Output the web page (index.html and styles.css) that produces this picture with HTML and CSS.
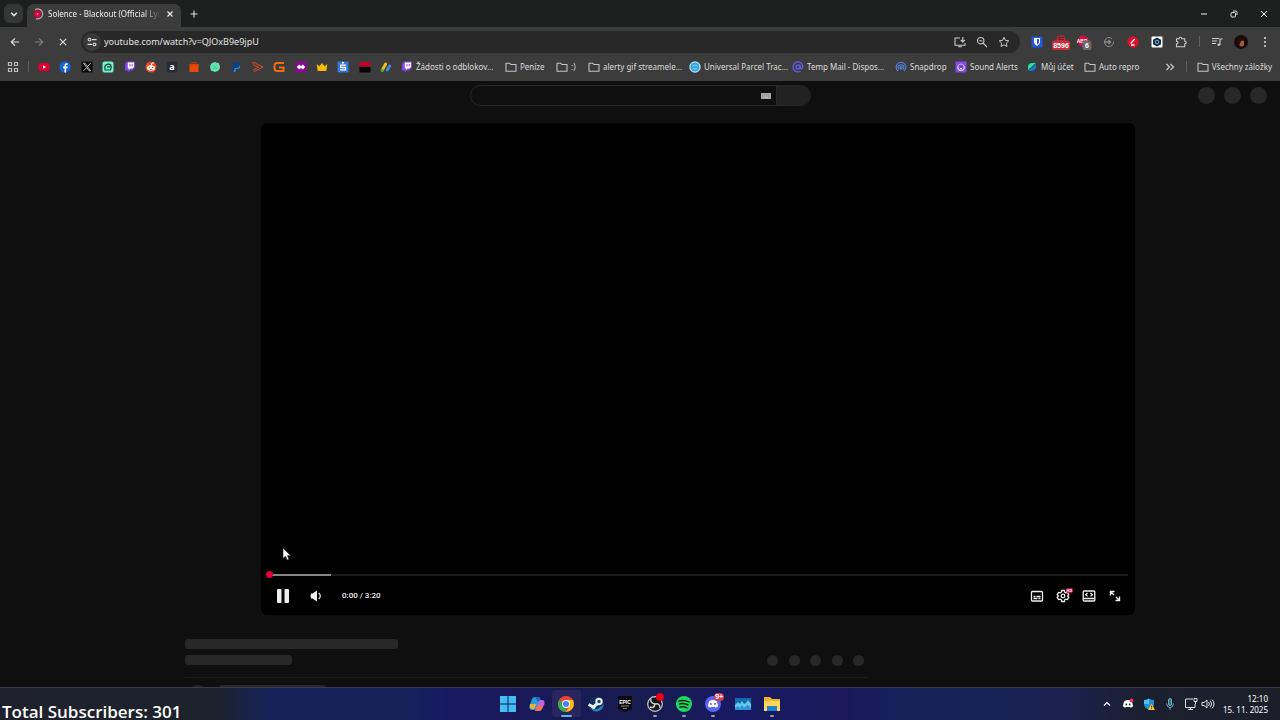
FILE: index.html
```html
<!DOCTYPE html>
<html lang="cs">
<head>
<meta charset="utf-8">
<title>Solence - Blackout (Official Lyric Video)</title>
<link rel="stylesheet" href="styles.css">
</head>
<body>
<svg class="defs" aria-hidden="true">
  <symbol id="folder" viewBox="0 0 12 12"><path d="M1 2.200h3.600l1.200 1.300H11v6.700H1z" fill="none" stroke="#c4c4c4" stroke-width="1.100" stroke-linejoin="round"/></symbol>
  <symbol id="twitch" viewBox="0 0 12 12"><path d="M1 2.700 3.200.5H11v6L7.800 9.400H6L3.700 11.700V9.400H1z" fill="#8446e8"/><path d="M3.800 1.500H10v4.600L8.500 7.500H6.700L5.200 8.800V7.500H3.800z" fill="#fff"/><path d="M6 3v2.300M8.200 3v2.300" stroke="#8446e8" stroke-width="1"/></symbol>
  <symbol id="discord" viewBox="0 0 12 12"><path d="M2.500 3c2-1.200 5-1.200 7 0 1 1.800 1.500 3.600 1.400 5.600-.9.7-1.700 1-2.500 1.100l-.5-.9q-1.900.5-3.800 0l-.5.900C2.800 9.600 2 9.300 1.100 8.600 1 6.600 1.500 4.800 2.500 3z" fill="#fff"/></symbol>
</svg>

<header class="browser">
  <div class="tabstrip">
    <button class="tab-search" aria-label="Hledat karty"><svg viewBox="0 0 10 10"><path d="M2.600 4 5 6.300 7.400 4" fill="none" stroke="#e0e0e0" stroke-width="1.300"/></svg></button>
    <div class="tab">
      <svg class="icon" viewBox="0 0 12 12"><circle cx="5.500" cy="6" r="3.500" fill="#e1003f"/><circle cx="5.500" cy="6" r="1" fill="#ff7898"/><path d="M3 1.700A5 5 0 1 1 4 10.600" fill="none" stroke="#b9a9b4" stroke-width="1.200"/></svg>
      <span class="tab-title">Solence - Blackout (Official Lyric Video)</span>
      <button class="tab-close" aria-label="Zavřít kartu"><svg viewBox="0 0 12 12"><path d="m3.500 3.500 5 5m0-5-5 5" stroke="#eee" stroke-width="1.200"/></svg></button>
    </div>
    <button class="new-tab" aria-label="Nová karta"><svg viewBox="0 0 12 12"><path d="M6 2.500v7M2.500 6h7" stroke="#ddd" stroke-width="1.100"/></svg></button>
    <div class="window-controls">
      <button aria-label="Minimalizovat"><svg viewBox="0 0 12 12"><path d="M3 6h6" stroke="#eee"/></svg></button>
      <button aria-label="Obnovit"><svg viewBox="0 0 12 12" fill="none" stroke="#ddd"><rect x="3" y="4.500" width="4.500" height="4.500" rx="1"/><path d="M5 3h2.500Q9 3 9 4.500V7"/></svg></button>
      <button aria-label="Zavřít"><svg viewBox="0 0 12 12"><path d="m3 3 6 6m0-6L3 9" stroke="#eee"/></svg></button>
    </div>
  </div>

  <div class="toolbar">
    <div class="nav">
      <button aria-label="Zpět"><svg viewBox="0 0 12 12" fill="none" stroke="#ddd" stroke-width="1.200"><path d="M10 6H2.500M6 2.300 2.300 6 6 9.700"/></svg></button>
      <button aria-label="Vpřed"><svg viewBox="0 0 12 12" fill="none" stroke="#808080" stroke-width="1.200"><path d="M2 6h7.500M6 2.300 9.700 6 6 9.700"/></svg></button>
      <button aria-label="Zastavit"><svg viewBox="0 0 12 12"><path d="m2.800 2.800 6.400 6.400m0-6.400L2.800 9.200" stroke="#ddd" stroke-width="1.100"/></svg></button>
    </div>
    <div class="omnibox">
      <button class="site-info" aria-label="Informace o webu"><svg viewBox="0 0 12 12" fill="none" stroke="#ddd" stroke-width="1.100"><circle cx="3.500" cy="3.600" r="1.400"/><path d="M6 3.600h4.500M1.500 8.400H6"/><circle cx="8.500" cy="8.400" r="1.400"/></svg></button>
      <input type="text" aria-label="Adresa" value="youtube.com/watch?v=QJOxB9e9jpU">
      <div class="omni-actions">
        <button aria-label="Nainstalovat"><svg viewBox="0 0 12 12" fill="none" stroke="#ccc" stroke-width="1.100"><path d="M6 2H1v7.300h10V7M4 10.700h4M8.800 1v4.500M6.800 4l2 2 2-2"/></svg></button>
        <button aria-label="Lupa"><svg viewBox="0 0 12 12" fill="none" stroke="#ccc" stroke-width="1.100"><circle cx="4.700" cy="4.700" r="3.200"/><path d="m7.200 7.200 3.800 3.800M3.200 4.700h3"/></svg></button>
        <button aria-label="Přidat záložku"><svg viewBox="0 0 12 12" fill="none" stroke="#ccc"><path d="m6 1.300 1.400 3.100 3.400.4-2.500 2.300.7 3.400-3-1.700-3 1.700.7-3.400L1.200 4.800l3.400-.4z"/></svg></button>
      </div>
    </div>
    <div class="extensions">
      <button aria-label="Bitwarden"><svg viewBox="0 0 12 12"><rect x=".5" y=".5" width="11" height="11" rx="1" fill="#2259d6"/><path d="M3 2h6v4q0 2.500-3 4-3-1.500-3-4z" fill="#fff"/><path d="M6 3h2v3q0 1.500-2 2.700z" fill="#2259d6"/></svg></button>
      <button aria-label="Oznámení"><svg class="wide" viewBox="0 0 18 16"><path d="M5 1.500q4-2.500 8 0l1 5H4z" fill="#b52b34"/><path d="M6 2.500h6M6 4.500h6" stroke="#5c252a"/><rect x="0" y="5.500" width="18" height="9.500" rx="2" fill="#c92c3c"/><text x="9" y="13" class="badge-text">8596</text></svg></button>
      <button aria-label="Blokování reklam"><svg class="wide" viewBox="0 0 18 16"><circle cx="7" cy="6" r="5.500" fill="#d40d43"/><text x="6" y="7.500" class="badge-text small">ABP</text><rect x="6.500" y="5.500" width="9" height="9.500" rx="2" fill="#686868"/><text x="11" y="13" class="badge-text">6</text></svg></button>
      <button aria-label="Rozšíření"><svg viewBox="0 0 12 12" fill="none" stroke="#8a8a8a"><circle cx="6" cy="6" r="4.500" stroke-dasharray="24 3"/><path d="M1 6h6M5.500 4l2 2-2 2" stroke-width="1.400"/></svg></button>
      <button aria-label="Editor"><svg viewBox="0 0 12 12"><circle cx="6" cy="6" r="5.700" fill="#dc1028"/><path d="m3.700 7.500 4-4.500M4 9h3.500" stroke="#fff" stroke-width="1.300"/></svg></button>
      <button aria-label="Kostka"><svg viewBox="0 0 12 12"><rect x=".5" y=".5" width="11" height="11" rx="1" fill="#fff"/><path d="m6 1.500 4 2.300v4.400l-4 2.300-4-2.300V3.800z" fill="#122c40"/><circle cx="6" cy="6" r="1.800" fill="none" stroke="#7caee0"/></svg></button>
      <button aria-label="Všechna rozšíření"><svg viewBox="0 0 12 12"><path d="M1.500 2.800H4q0-1.500 1.400-1.500T6.800 2.800h2.900v2.500q1.600 0 1.600 1.300T9.700 8v2.700H1.500V8q1.500 0 1.500-1.400T1.500 5.200z" fill="none" stroke="#ccc" stroke-width="1.100"/></svg></button>
      <span class="divider"></span>
      <button aria-label="Média"><svg viewBox="0 0 12 12" fill="none" stroke="#ccc" stroke-width="1.200"><path d="M1 2.500h7M1 5h5M1 7.500h4M9 9V3h2.500"/><circle cx="7.700" cy="8.800" r="1.300" fill="#ccc" stroke="none"/></svg></button>
      <button aria-label="Profil"><svg class="avatar" viewBox="0 0 14 14"><circle cx="7" cy="7" r="7" fill="#190b0a"/><path d="M5 6q3-3 5 0v4q-2 3-5 0z" fill="#a35b3f"/><path d="M3 8q0-5 5-5l3 2-4 1-2 5z" fill="#280d0c"/></svg></button>
      <button aria-label="Nabídka"><svg viewBox="0 0 12 12" fill="#ddd"><circle cx="6" cy="2" r="1"/><circle cx="6" cy="6" r="1"/><circle cx="6" cy="10" r="1"/></svg></button>
    </div>
  </div>

  <nav class="bookmarks" aria-label="Záložky">
    <button class="apps" aria-label="Aplikace"><svg class="icon" viewBox="0 0 12 12" fill="none" stroke="#bbb" stroke-width="1.200"><path d="M1.500 1.500h3v3h-3zM7.500 1.500h3v3h-3zM1.500 7.500h3v3h-3zM7.500 7.500h3v3h-3z"/></svg></button>
    <span class="divider"></span>
    <div class="icon-links">
      <a href="#" aria-label="YouTube"><svg class="icon" viewBox="0 0 12 12"><rect x=".5" y="2" width="11" height="8" rx="1.500" fill="#e00032"/><path d="m5 4.200 3 1.800-3 1.800z" fill="#fff"/></svg></a>
      <a href="#" aria-label="Facebook"><svg class="icon" viewBox="0 0 12 12"><circle cx="6" cy="6" r="5.700" fill="#1764d8"/><path d="M5.500 11.500V7.300H4V5.500h1.500V4.200q0-2 2-2h1.200v1.600h-1q-.7 0-.7.700v1h1.700l-.3 1.800H7v4.200z" fill="#fff"/></svg></a>
      <a href="#" aria-label="X"><svg class="icon" viewBox="0 0 12 12"><path d="M.5.500h11v11H.5z" fill="#080808"/><path d="m2.500 2.200 5.600 7.600h1.500L4 2.200zM9.700 2 6.500 5.500M5.500 6.700 2.300 10" fill="none" stroke="#ddd" stroke-width=".8"/></svg></a>
      <a href="#" aria-label="StreamElements"><svg class="icon" viewBox="0 0 12 12"><rect x=".5" y=".5" width="11" height="11" rx="2" fill="#73f5cb"/><path d="M2.800 7q0-3.500 3.200-3.800Q9 3 9.200 6L8.500 9H3.200zM5 5.800h3" fill="none" stroke="#123e38" stroke-width="1.200"/></svg></a>
      <a href="#" aria-label="Twitch"><svg class="icon"><use href="#twitch"/></svg></a>
      <a href="#" aria-label="Reddit"><svg class="icon" viewBox="0 0 12 12"><circle cx="6" cy="6" r="5.500" fill="#ee4a20"/><ellipse cx="6" cy="7" rx="4" ry="2.800" fill="#fff"/><path d="M6 4.500 7 2h2" fill="none" stroke="#fff"/><circle cx="4.500" cy="6.500" r=".7" fill="#ee4a20"/><circle cx="7.500" cy="6.500" r=".7" fill="#ee4a20"/><path d="M4.500 8.300q1.500.7 3 0" fill="none" stroke="#333" stroke-width=".6"/></svg></a>
      <a href="#" aria-label="Amazon"><svg class="icon" viewBox="0 0 12 12"><rect x=".5" y=".5" width="11" height="11" rx="2" fill="#262c36"/><text x="6" y="9" class="logo-text">a</text></svg></a>
      <a href="#" aria-label="Obchod"><svg class="icon" viewBox="0 0 12 12"><path d="M1.500 3h9v8h-9z" fill="#e84a0b"/><path d="M4 4.500V2.200q2-1.700 4 0v2.300" fill="none" stroke="#b73808" stroke-width="1.100"/></svg></a>
      <a href="#" aria-label="Zelený robot"><svg class="icon" viewBox="0 0 12 12"><path d="m6 1 2 .8 2 .4.500 2L11 6l-.5 2-1.500 2-2 .5L6 11l-2-.7-2-.6-.5-2L1 6l.5-2L3 2z" fill="#61e5ad"/><path d="M4 4.500l1 1M7.500 4.300l-1 1M4 7.500l2-1 2 1" fill="none" stroke="#37b185" stroke-width=".8"/></svg></a>
      <a href="#" aria-label="PayPal"><svg class="icon" viewBox="0 0 12 12"><path d="M3.500 1H8q3 .5 2.300 3.500Q9.500 7 6.500 7H5l-.8 3H1.700z" fill="#123d84"/><path d="M9.800 3.500Q11.500 7.800 7 8H6l-.6 3H3.500L4.600 7H6.500Q9.500 7 9.800 3.500z" fill="#268bd0"/></svg></a>
      <a href="#" aria-label="Přehrávač"><svg class="icon" viewBox="0 0 12 12" fill="none" stroke="#e34b26" stroke-linejoin="round"><path d="M1 1 11 6 1.500 10.800"/><path d="M1 3.800 6.500 6.200 1 8.800M1 1v2" stroke-width=".9"/></svg></a>
      <a href="#" aria-label="G"><svg class="icon" viewBox="0 0 12 12"><path d="M11 2H4Q1.500 2 1.500 5v2Q1.500 10 4 10h6.500V6.500H6" fill="none" stroke="#ee6d12" stroke-width="2"/></svg></a>
      <a href="#" aria-label="Fialová"><svg class="icon" viewBox="0 0 12 12"><path d="M.5.500h11v11H.5z" fill="#8b0894"/><path d="m1.700 6 2.600-2.500L6 5.200l1.700-1.700L10.300 6 7.700 8.500 6 6.800 4.300 8.500z" fill="#fff"/></svg></a>
      <a href="#" aria-label="Koruna"><svg class="icon" viewBox="0 0 12 12"><path d="m.7 3 2.700 2.300L6 2l2.600 3.300L11.300 3l-1 7H1.700z" fill="#f8bd08"/></svg></a>
      <a href="#" aria-label="Spořitelna"><svg class="icon" viewBox="0 0 12 12"><rect x=".5" y=".5" width="11" height="11" rx="1" fill="#3278dd"/><circle cx="6" cy="1.800" r="1" fill="#fff"/><path d="M9 4.200H3.700v2.300h4.800v2.400H3" fill="none" stroke="#fff" stroke-width="1.300"/></svg></a>
      <a href="#" aria-label="Kniha"><svg class="icon" viewBox="0 0 12 12"><path d="M.5 1h11v5H.5z" fill="#c1002c"/><path d="M.5 6h11v5.500H.5z" fill="#050505"/><path d="M2 5.500h8" stroke="#701528"/></svg></a>
      <a href="#" aria-label="AdSense"><svg class="icon" viewBox="0 0 12 12" stroke-linecap="round" stroke-width="3"><path d="m2.200 9.300 3.500-6.300" stroke="#f2bd13"/><path d="m7.200 9 2.500-4" stroke="#4285e8"/><circle cx="2.200" cy="9.300" r="1.500" fill="#34a853"/></svg></a>
    </div>
    <div class="text-links">
      <a href="#"><svg class="icon"><use href="#twitch"/></svg>Žádosti o odblokov...</a>
      <a href="#"><svg class="icon"><use href="#folder"/></svg>Peníze</a>
      <a href="#"><svg class="icon"><use href="#folder"/></svg>:)</a>
      <a href="#"><svg class="icon"><use href="#folder"/></svg>alerty gif streamele...</a>
      <a href="#"><svg class="icon" viewBox="0 0 12 12"><circle cx="6" cy="6" r="5.700" fill="#bde6fa"/><circle cx="6" cy="6" r="4.600" fill="#35a7df"/><path d="M3.500 5q2.500-2 5 0M4 7.500q2 1 4 0" stroke="#7fd2f8" fill="none"/></svg>Universal Parcel Trac...</a>
      <a href="#"><svg class="icon" viewBox="0 0 12 12" fill="none" stroke="#665ce8" stroke-width="1.300"><circle cx="6" cy="6" r="2"/><path d="M8 3.800V7q.8 1.500 2.200 0 1.400-3-1.200-5Q6-.2 3 2 .2 4.500 1.400 8 3.500 12 8.500 10.500"/></svg>Temp Mail - Dispos...</a>
      <a href="#"><svg class="icon" viewBox="0 0 12 12" fill="none" stroke="#5484dc" stroke-width="1.100"><path d="M3 10Q.5 8 1.300 5 3 1.300 6 1.300T10.700 5Q11.500 8 9 10"/><path d="M4 8.500Q2.500 7 3.500 5q2.500-2.500 5 0 1 2-.5 3.500"/><circle cx="6" cy="6.500" r="1"/><path d="M6 7.500V9"/></svg>Snapdrop</a>
      <a href="#"><svg class="icon" viewBox="0 0 12 12"><path d="M.5.500h11v11H.5z" fill="#824bea"/><path d="M2 7V5.500q4-6 8 0V7l-1.500 2.500q-2.500 1-5 0z" fill="#d9b9ff"/><circle cx="6" cy="6" r="2.500" fill="#7440d6"/><path d="M4.800 7.300q1.200.8 2.400 0" stroke="#fff" fill="none"/></svg>Sound Alerts</a>
      <a href="#"><svg class="icon" viewBox="0 0 12 12"><path d="M2 7V5q1-3 4-3h4L2 9z" fill="#23e09b"/><path d="M10 3v3q-.5 4-4.500 4H2z" fill="#1878da"/></svg>Můj účet</a>
      <a href="#"><svg class="icon"><use href="#folder"/></svg>Auto repro</a>
    </div>
    <div class="bookmark-end">
      <button aria-label="Další záložky"><svg class="icon" viewBox="0 0 12 12" fill="none" stroke="#ccc" stroke-width="1.200"><path d="m2.500 3 3 3-3 3M6.500 3l3 3-3 3"/></svg></button>
      <span class="divider"></span>
      <a href="#"><svg class="icon"><use href="#folder"/></svg>Všechny záložky</a>
    </div>
  </nav>
</header>

<main class="page">
  <div class="masthead">
    <form class="search">
      <input type="text" aria-label="Hledat">
      <svg class="keyboard" viewBox="0 0 10 6"><path d="M0 0h10v6H0z" fill="#a6a6a6"/><path d="M1 1.500h8M1 3h8" stroke="#959595" stroke-dasharray="1 1"/><path d="M3 4.700h4" stroke="#ccc" stroke-width=".7"/></svg>
      <button type="button" aria-label="Hledat"></button>
    </form>
    <div class="account"><i></i><i></i><i></i></div>
  </div>
  <section class="player" aria-label="Přehrávač videa">
    <div class="progress"><div class="loaded"></div><span class="scrubber"></span></div>
    <div class="controls">
      <button class="pause" aria-label="Pozastavit"><svg viewBox="0 0 16 16" fill="#eee"><rect x="2" y="1" width="4.500" height="14" rx="1"/><rect x="9.500" y="1" width="4.500" height="14" rx="1"/></svg></button>
      <button class="volume" aria-label="Hlasitost"><svg viewBox="0 0 16 16"><path d="M3 5.500h1.500L9 2.500v11L4.500 10.500H3Q2 8 3 5.500z" fill="#eee"/><path d="M10.800 5q3 3 0 6" fill="none" stroke="#eee" stroke-width="1.200"/></svg></button>
      <span class="time">0:00 / 3:20</span>
      <div class="right-controls">
        <button aria-label="Titulky"><svg viewBox="0 0 14 14" fill="none" stroke="#eee" stroke-width="1.300"><rect x="1.500" y="2.500" width="11" height="9.500" rx="1"/><path d="M3.500 7.500h2m1 0h4m-7 2h4m1 0h2"/></svg></button>
        <button class="settings" aria-label="Nastavení"><svg viewBox="0 0 14 14" fill="none" stroke="#eee" stroke-width="1.300"><path d="m5.700 1.500-.5 1.700-1 .6-1.700-.4-1.300 2.200L2.400 7 1.200 8.400l1.300 2.200 1.700-.4 1 .6.5 1.700h2.600l.5-1.700 1-.6 1.700.4 1.300-2.200L11.600 7l1.200-1.400-1.300-2.200-1.700.4-1-.6-.5-1.700z"/><circle cx="7" cy="7" r="1.800"/></svg><span class="hd">HD</span></button>
        <button aria-label="Režim kina"><svg viewBox="0 0 14 14" fill="none" stroke="#eee" stroke-width="1.300"><rect x="1.200" y="2" width="11.600" height="10" rx="1"/><path d="M1.500 9.500h11M5.500 4 3.700 5.700l1.800 1.700M8.500 4l1.800 1.700-1.800 1.700"/></svg></button>
        <button aria-label="Celá obrazovka"><svg viewBox="0 0 14 14" fill="none" stroke="#eee" stroke-width="1.400"><path d="M2.500 6.500v-4h4M3 3l3 3M11.500 7.500v4h-4M11 11 8 8"/></svg></button>
      </div>
    </div>
  </section>
  <section class="meta" aria-hidden="true">
    <div class="bar title-bar"></div>
    <div class="meta-row"><div class="bar"></div><div class="dots"><i></i><i></i><i></i><i></i><i></i></div></div>
    <div class="owner"><i></i><div class="bar"></div></div>
  </section>
</main>

<footer class="taskbar">
  <div class="subscribers">Total Subscribers: 301</div>
  <div class="task-icons">
    <button aria-label="Start"><svg viewBox="0 0 18 18"><path d="M1 1h7.500v7.500H1zM9.500 1H17v7.500H9.500zM1 9.500h7.500V17H1zM9.500 9.500H17V17H9.500z" fill="#43bdf3"/></svg></button>
    <button aria-label="Copilot"><svg viewBox="0 0 18 18"><path d="M7 2h4l1.500 2L9 13q-1 2-3 2H4q-3 0-2.500-4L4 4q1-2 3-2z" fill="#2b9bdb"/><path d="M2 9h6l-1.500 5H4q-3 0-2-5z" fill="#eab12f"/><path d="M12 5h2q3 0 2.500 4L14 14q-1 2-3 2H7l1-3 2.300-6q.5-2 1.700-2z" fill="#bd65dc"/><path d="m10 10 5 1-1 3q-1 2-3 2H7z" fill="#ed7259"/><path d="M7 2h4l1.500 3L10 7z" fill="#196ac1"/></svg></button>
    <button class="active running" aria-label="Chrome"><svg viewBox="0 0 18 18"><circle cx="9" cy="9" r="8" fill="#e94335"/><path d="M2.100 5 9 9v8Q2 17 1 10 .8 7 2.100 5z" fill="#34a853"/><path d="M9 5h7q2 5-1 9-2.500 3-6 3l3.500-6z" fill="#fbc116"/><circle cx="9" cy="9" r="4" fill="#fff"/><circle cx="9" cy="9" r="3" fill="#3f83ee"/></svg></button>
    <button aria-label="Steam"><svg viewBox="0 0 18 18"><path d="M3 5a7.500 7.500 0 1 1 0 8z" fill="#143259"/><path d="M3 12.500q6 5 14-3.500-1 7-7.500 7.500-4 0-6.500-4z" fill="#2885ba"/><circle cx="12" cy="6.500" r="2.700" fill="#244062" stroke="#e7eef5" stroke-width="2"/><path d="m1.500 9.500 5 2.500 4-3.500" fill="none" stroke="#e7eef5" stroke-width="3"/><circle cx="6.500" cy="12" r="2" fill="#e7eef5"/></svg></button>
    <button aria-label="Epic Games"><svg viewBox="0 0 18 18"><path d="M2 1h14v13l-7 3-7-3z" fill="#080a10"/><text x="9" y="8.500" class="epic-text">EPIC</text><path d="M5 11h8M7 13.500h4" stroke="#888"/></svg></button>
    <button class="running" aria-label="OBS"><svg viewBox="0 0 18 18"><circle cx="9" cy="9" r="7.300" fill="#16171d" stroke="#ccc" stroke-width="1.200"/><path d="M9 9Q4 8 5 4M9 9q5-1 5 4M9 9q-1 5-5 3" fill="none" stroke="#ccc" stroke-width="1.500"/></svg><span class="notice"></span></button>
    <button class="running" aria-label="Spotify"><svg viewBox="0 0 18 18"><circle cx="9" cy="9" r="8" fill="#20d760"/><path d="M4 6q5-1.500 10 1M4.500 9q4-1.200 8.500 1M5 12q4-1 7 1" fill="none" stroke="#10251a" stroke-width="1.500" stroke-linecap="round"/></svg></button>
    <button class="running" aria-label="Discord"><svg viewBox="0 0 18 18"><circle cx="9" cy="9" r="8" fill="#5865f2"/><use href="#discord" x="3" y="3" width="12" height="12"/><circle cx="7" cy="9" r="1" fill="#5865f2"/><circle cx="11" cy="9" r="1" fill="#5865f2"/></svg><span class="notice count">9+</span></button>
    <button aria-label="Monitor"><svg viewBox="0 0 18 18"><path d="M1 3h16v12H1z" fill="#126cab"/><path d="M1 15v-5l3-3 2 2 2-3 2 3 2-1 2-3 3 4v6z" fill="#62c8ee"/><path d="M1 15v-2l3-2 2 2 2-3 2 3 2-2 2-1 3 3v2z" fill="#2e93ce"/></svg></button>
    <button class="running" aria-label="Průzkumník"><svg viewBox="0 0 18 18"><path d="M1 2h6l2 2h8v12H1z" fill="#eeb52a"/><path d="M1 6h16v10H1z" fill="#ffd55b"/><path d="M4 11h10v5H4z" fill="#1985d1"/></svg></button>
  </div>
  <div class="tray">
    <button aria-label="Skryté ikony"><svg viewBox="0 0 14 14"><path d="m4 8.500 3-3 3 3" fill="none" stroke="#fff" stroke-width="1.200"/></svg></button>
    <button aria-label="Discord"><svg viewBox="0 0 14 14"><use href="#discord" x="1" y="1" width="12" height="12"/><circle cx="5.300" cy="7.500" r=".9" fill="#22242d"/><circle cx="8.700" cy="7.500" r=".9" fill="#22242d"/><circle cx="10.500" cy="3.500" r="2" fill="#e93546"/></svg></button>
    <button aria-label="Zabezpečení"><svg viewBox="0 0 14 14"><path d="M2 3q3 0 5-1.500Q9 3 12 3v4q0 4-5 5.500Q2 11 2 7z" fill="#2491d4"/><path d="M7 1.500V7H2V3q3 0 5-1.500z" fill="#51bfee"/><path d="m9.500 6.500 3.500 6.500H6z" fill="#f8c52b"/><path d="M9.500 8.500v2M9.500 11.200v.9" stroke="#222" stroke-width=".8"/></svg></button>
    <button aria-label="Mikrofon"><svg viewBox="0 0 14 14" fill="none" stroke="#71aeb9"><rect x="5.500" y="1.500" width="3" height="7" rx="1.500" fill="#39717c"/><path d="M3.500 6.500Q4 10.500 7 10.500t3.500-4M7 10.500v2.300"/></svg></button>
    <button aria-label="Síť"><svg viewBox="0 0 14 14" fill="none" stroke="#ddd"><path d="M9 2H1.500v8.500H11V7M4 12.500h5M6.500 10.500v2M10 1.500v3h3v-3zM11.500 4.500V7"/></svg></button>
    <button class="sound" aria-label="Zvuk"><svg viewBox="0 0 14 14" fill="none" stroke="#ddd"><path d="M1 5.500h2L6 3v8L3 8.500H1zM7.500 5q2 2 0 4M9.200 3.700q3 3.300 0 6.600M11 2.500q4 4.500 0 9"/></svg></button>
    <time datetime="2025-11-15T12:10">12:10<br>15. 11. 2025</time>
  </div>
</footer>

<svg class="cursor" viewBox="0 0 10 14" aria-hidden="true"><path d="M1 1v10.500l2.500-2.200L5 13l2-.8-1.600-3.500h3.300z" fill="#fff" stroke="#222" stroke-width=".6"/></svg>
</body>
</html>
```
FILE: styles.css
```css
* { box-sizing: border-box; }

body {
  margin: 0;
  height: 100vh;
  display: flex;
  flex-direction: column;
  overflow: hidden;
  background: #0f0f0f;
  color: #ddd;
  font-family: "Noto Sans", "Open Sans", sans-serif;
  font-size: 8px;
}

.defs { position: absolute; width: 0; height: 0; }

button, input { font: inherit; color: inherit; background: none; border: 0; padding: 0; margin: 0; outline: 0; }
button { display: flex; align-items: center; justify-content: center; position: relative; }
button svg { width: 12px; height: 12px; display: block; flex: none; }
a { color: inherit; text-decoration: none; }
.icon { width: 12px; height: 12px; flex: none; display: block; overflow: visible; }
.divider { width: 1px; height: 11px; background: #606060; justify-self: center; }

/* Browser chrome */
.browser { background: #3c3c3c; flex: none; }
.tabstrip { height: 27px; padding: 4px 1px 0 4px; display: flex; background: #1e201f; }
.tab-search { width: 19px; height: 19px; border-radius: 6px; background: #353736; }
.tab {
  width: 154px;
  margin-left: 4px;
  padding: 0 5px 4px;
  display: flex;
  align-items: center;
  gap: 4px;
  background: #3c3c3c;
  border-radius: 7px 7px 0 0;
}
.tab-title {
  flex: 1;
  overflow: hidden;
  white-space: nowrap;
  color: #eee;
  mask-image: linear-gradient(90deg, #000 86%, transparent);
}
.tab-close { width: 12px; height: 12px; }
.new-tab { width: 26px; height: 19px; }
.window-controls { margin-left: auto; display: flex; }
.window-controls button { width: 30px; height: 19px; }

.toolbar { height: 29px; display: flex; align-items: center; padding: 0 3px; }
.nav { display: flex; }
.nav button { width: 24px; height: 24px; }
.omnibox {
  flex: 1;
  height: 22px;
  margin: 0 5px 0 6px;
  padding: 0 5px 0 2px;
  display: flex;
  align-items: center;
  background: #282828;
  border-radius: 11px;
}
.site-info { width: 18px; height: 18px; border-radius: 50%; background: #3a3a3a; }
.omnibox input { flex: 1; margin-left: 3px; font-size: 9px; color: #e3e3e3; }
.omni-actions { display: flex; }
.omni-actions button { width: 22px; height: 22px; }
.extensions { display: grid; grid-template-columns: repeat(7, 24px) 12px repeat(3, 24px); align-items: center; }
.extensions button { height: 24px; }
.extensions .wide { width: 18px; height: 16px; margin-top: 2px; }
.extensions .avatar { width: 14px; height: 14px; }
.badge-text { font: 700 7px "Liberation Sans", sans-serif; fill: #fff; text-anchor: middle; }
.badge-text.small { font-size: 5px; }
.logo-text { font: 700 9px "Noto Sans", sans-serif; fill: #fff; text-anchor: middle; }

.bookmarks { height: 25px; padding: 0 8px 4px 7px; display: flex; align-items: center; white-space: nowrap; }
.apps { margin-right: 9px; }
.icon-links { width: 354px; margin-left: 9px; display: flex; justify-content: space-between; }
.text-links {
  margin-left: 9px;
  display: grid;
  grid-template-columns: 104px 51px 32px 101px 103px 103px 60px 71px 58px 72px;
}
.text-links a, .bookmark-end a { display: flex; align-items: center; gap: 3px; }
.bookmark-end { margin-left: auto; display: flex; align-items: center; gap: 10px; }

/* Page */
.page { flex: 1; min-height: 0; overflow: hidden; }
.masthead { height: 29px; display: grid; grid-template-columns: 1fr 341px 1fr; align-items: center; padding: 0 13px; }
.search { grid-column: 2; height: 21px; display: flex; align-items: center; border: 1px solid #292929; border-radius: 11px; overflow: hidden; }
.search input { flex: 1; height: 19px; }
.keyboard { width: 10px; height: 6px; margin-right: 5px; }
.search button { width: 34px; height: 19px; background: #222; border-left: 1px solid #292929; }
.account { display: flex; justify-content: flex-end; gap: 9px; }
.account i { width: 17px; height: 17px; border-radius: 50%; background: #282828; }

.player {
  margin: 13px 145px 0 261px;
  aspect-ratio: 16 / 9;
  padding: 0 7px 7px;
  display: flex;
  flex-direction: column;
  justify-content: flex-end;
  background: #000;
  border-radius: 6px;
}
.progress { position: relative; height: 2px; margin-bottom: 8px; background: #1c1c1c; }
.loaded { width: 63px; height: 2px; background: #858585; }
.scrubber { position: absolute; left: -2px; top: -3px; width: 7px; height: 7px; border-radius: 50%; background: #e6003f; }
.controls { height: 24px; display: flex; align-items: center; }
.controls .pause, .controls .volume { width: 30px; height: 24px; }
.controls svg { width: 16px; height: 16px; }
.controls .volume { margin-left: 3px; }
.time { margin-left: 11px; font: 500 8px Roboto, sans-serif; color: #eee; }
.right-controls { margin-left: auto; display: flex; }
.right-controls button { width: 26px; height: 24px; }
.right-controls svg { width: 14px; height: 14px; }
.hd { position: absolute; top: 4px; right: 3px; padding: 0 1px; border-radius: 2px; background: #e1003f; color: #fff; font: 700 4px/5px Roboto, sans-serif; }

.meta { margin: 24px 412px 0 185px; }
.bar { width: 107px; height: 10px; border-radius: 3px; background: #282828; }
.title-bar { width: 213px; }
.meta-row { margin-top: 6px; padding-bottom: 11px; display: flex; align-items: center; justify-content: space-between; border-bottom: 1px solid #1c1c1c; }
.dots { width: 97px; margin-right: 4px; display: flex; justify-content: space-between; }
.dots i { width: 11px; height: 11px; border-radius: 50%; background: #282828; }
.owner { display: flex; gap: 12px; padding: 7px 0 0 4px; }
.owner i { width: 18px; height: 18px; border-radius: 50%; background: #282828; }

/* Taskbar */
.taskbar {
  flex: none;
  height: 33px;
  border-top: 1px solid #343b4b;
  display: grid;
  grid-template-columns: 1fr 294px 1fr;
  align-items: center;
  background: linear-gradient(90deg, #1e212b 0, #1c232d 17%, #17225a 21%, #17225a 31%, #171a62 35%, #19195a 40%, #171c50 50%, #171a62 58%, #19195a 66%, #17225a 71%, #1a2150 83%, #1b2030 89%, #1c1f2a 100%);
}
.subscribers { align-self: end; padding-left: 2px; white-space: nowrap; color: #fff; font: 600 17px/17px "Open Sans", sans-serif; }
.task-icons { display: grid; grid-template-columns: repeat(10, 1fr); }
.task-icons button { height: 32px; }
.task-icons svg { width: 18px; height: 18px; }
.task-icons .active { height: 27px; margin-top: 2px; background: #29265d; border-radius: 3px; }
.running::after { content: ""; position: absolute; bottom: 3px; width: 4px; height: 2px; border-radius: 1px; background: #9899a9; }
.active::after { width: 11px; bottom: 0; background: #55b7eb; }
.notice { position: absolute; top: 5px; right: 5px; min-width: 8px; height: 8px; border-radius: 4px; background: #e60014; color: #fff; font: 700 7px/8px "Liberation Sans", sans-serif; }
.notice.count { right: 4px; padding: 0 1px; background: #d93a4c; }
.epic-text { font: 700 5px "Liberation Sans", sans-serif; fill: #fff; text-anchor: middle; }
.tray { display: flex; align-items: center; justify-content: flex-end; padding-right: 12px; color: #fff; }
.tray button { width: 21px; height: 30px; }
.tray .sound { width: 14px; }
.tray svg { width: 14px; height: 14px; }
.tray time { width: 53px; text-align: right; line-height: 11px; white-space: nowrap; }

.cursor { position: absolute; left: 282px; top: 547px; width: 10px; height: 14px; }
```
